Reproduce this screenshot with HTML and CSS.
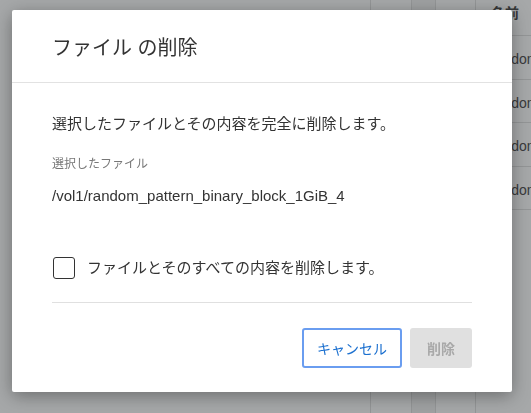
FILE: index.html
```html
<!DOCTYPE html>
<html lang="ja">
<head>
<meta charset="utf-8">
<title>ファイル の削除</title>
<link rel="stylesheet" href="styles.css">
</head>
<body>
<div class="page">
  <div class="table">
    <div class="row head">
      <div class="c c1"></div><div class="c c2"></div><div class="c c3"></div><div class="c c4"></div><div class="c c5">名前</div>
    </div>
    <div class="row"><div class="c c1"></div><div class="c c2"></div><div class="c c3"></div><div class="c c4"></div><div class="c c5">random_pattern_binary_block_1GiB_1</div></div>
    <div class="row"><div class="c c1"></div><div class="c c2"></div><div class="c c3"></div><div class="c c4"></div><div class="c c5">random_pattern_binary_block_1GiB_2</div></div>
    <div class="row"><div class="c c1"></div><div class="c c2"></div><div class="c c3"></div><div class="c c4"></div><div class="c c5">random_pattern_binary_block_1GiB_3</div></div>
    <div class="row"><div class="c c1"></div><div class="c c2"></div><div class="c c3"></div><div class="c c4"></div><div class="c c5">random_pattern_binary_block_1GiB_4</div></div>
    <div class="row filler"><div class="c c1"></div><div class="c c2"></div><div class="c c3"></div><div class="c c4"></div><div class="c c5"></div></div>
  </div>
</div>
<div class="overlay">
  <div class="dialog" role="dialog">
    <div class="dlg-head">ファイル の削除</div>
    <div class="dlg-body">
      <p class="desc">選択したファイルとその内容を完全に削除します。</p>
      <div class="label">選択したファイル</div>
      <div class="path">/vol1/random_pattern_binary_block_1GiB_4</div>
      <label class="check-row">
        <input type="checkbox" class="box">
        <span class="check-text">ファイルとそのすべての内容を削除します。</span>
      </label>
      <div class="sep"></div>
      <div class="actions">
        <button class="btn btn-cancel">キャンセル</button>
        <button class="btn btn-delete" disabled>削除</button>
      </div>
    </div>
  </div>
</div>
</body>
</html>
```
FILE: styles.css
```css
html, body {
  margin: 0;
  padding: 0;
  width: 531px;
  height: 413px;
  overflow: hidden;
  font-family: "Liberation Sans", "Noto Sans CJK JP", sans-serif;
}

.page {
  background: #ffffff;
  height: 413px;
  overflow: hidden;
}

.table {
  display: flex;
  flex-direction: column;
  height: 413px;
}

.row {
  display: grid;
  grid-template-columns: 371px 41px 24px 40px 1fr;
  height: 44px;
  flex: none;
}

.row:nth-child(odd) {
  height: 43px;
}

.row.head {
  height: 36px;
}

.row.filler {
  flex: 1;
}

.c {
  border-right: 1px solid #e0e0e0;
  border-bottom: 1px solid #e0e0e0;
  box-sizing: border-box;
  white-space: nowrap;
  overflow: hidden;
}

.c1,
.filler .c {
  border-bottom: none;
}

.c3 {
  background: #f4f4f4;
}

.c5 {
  border-right: none;
  padding-left: 15px;
  font-size: 14px;
  line-height: 47px;
  color: #4a4a4a;
}

.head .c5 {
  line-height: 16px;
  padding-top: 5px;
  font-weight: bold;
  color: #444;
}

.overlay {
  position: fixed;
  inset: 0;
  background: rgba(33, 37, 41, 0.4);
  padding: 10px 0 0 12px;
}

.dialog {
  width: 500px;
  background: #ffffff;
  border-radius: 2px;
  box-shadow: 0 4px 18px rgba(0, 0, 0, 0.35);
  color: #333333;
}

.dlg-head {
  height: 72px;
  padding: 0 40px;
  display: flex;
  align-items: center;
  border-bottom: 1px solid #e2e2e2;
  font-size: 20px;
  color: #333;
}

.dlg-body {
  padding: 30px 40px 24px;
}

.desc {
  margin: 0;
  font-size: 15px;
  line-height: 22px;
}

.label {
  margin-top: 20px;
  font-size: 12px;
  line-height: 18px;
  color: #777;
}

.path {
  margin-top: 12px;
  font-size: 15px;
  line-height: 22px;
  color: #333;
}

.check-row {
  margin-top: 50px;
  display: flex;
  align-items: center;
  gap: 12px;
  height: 22px;
}

.box {
  appearance: none;
  -webkit-appearance: none;
  margin: 0 0 0 1px;
  width: 22px;
  height: 22px;
  border: 1px solid #333;
  border-radius: 3px;
  background: #fff;
  box-sizing: border-box;
}

.check-text {
  font-size: 15px;
  line-height: 22px;
  color: #333;
}

.sep {
  margin-top: 23px;
  border-top: 1px solid #e0e0e0;
}

.actions {
  margin-top: 25px;
  display: flex;
  justify-content: flex-end;
  gap: 8px;
}

.btn {
  height: 40px;
  box-sizing: border-box;
  border-radius: 3px;
  font-family: "Liberation Sans", "Noto Sans CJK JP", sans-serif;
  font-size: 14px;
  padding: 0;
}

.btn-cancel {
  width: 100px;
  background: #fff;
  border: 2px solid #6a9df0;
  color: #1a6fcf;
}

.btn-delete {
  width: 62px;
  background: #e0e0e0;
  border: none;
  color: #a9a9a9;
  font-weight: bold;
}
```
